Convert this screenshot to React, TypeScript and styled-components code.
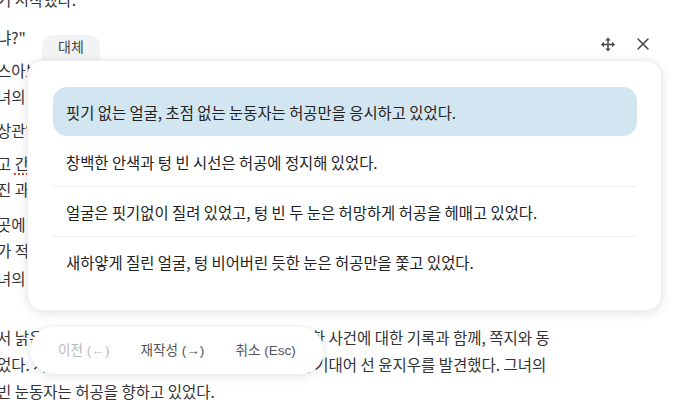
import React from 'react';
import styled, { createGlobalStyle } from 'styled-components';

const GlobalStyle = createGlobalStyle`
  html, body {
    margin: 0;
    padding: 0;
    background: #ffffff;
  }
  body {
    font-family: "Noto Sans CJK KR", "Noto Sans", sans-serif;
  }
`;

// background document lines: text, gap above (px)
const docLines: { text: string; gap: number; typo?: string; rest?: string }[] = [
  { text: '기 시작했다.', gap: 0 },
  { text: '냐?"', gap: 12 },
  { text: '스아브터 시작된 이야기는 점점 더 깊은 곳으로 흘러갔다.', gap: 7 },
  { text: '녀의 목소리는 낮고 차분했지만, 어딘가 떨리고 있었다.', gap: 0 },
  { text: '상관없다는 듯 그는 고개를 돌렸다.', gap: 8 },
  { text: '고 ', typo: '간', rest: '신히 버텨온 시간들이 한순간에 무너졌다.', gap: 7 },
  { text: '진 과거의 기억들이 하나둘 떠오르기 시작했다.', gap: 0 },
  { text: '곳에 남겨진 흔적은 누군가의 것이었다.', gap: 9 },
  { text: '가 적어 놓은 메모에는 알 수 없는 숫자들이 가득했다.', gap: 0 },
  { text: '녀의 얼굴은 창백하게 질려 있었다.', gap: 2 },
  {
    text: '서 낡은 서류를 꺼냈다. 안에는 오래전 해결되지 못한 사건에 대한 기록과 함께, 쪽지와 동',
    gap: 33,
  },
  {
    text: '었다. 사무실 안에 들어선 그는 창가의 차가운 벽에 기대어 선 윤지우를 발견했다. 그녀의',
    gap: 1,
  },
  { text: '빈 눈동자는 허공을 향하고 있었다.', gap: 1 },
];

const options = [
  '핏기 없는 얼굴, 초점 없는 눈동자는 허공만을 응시하고 있었다.',
  '창백한 안색과 텅 빈 시선은 허공에 정지해 있었다.',
  '얼굴은 핏기없이 질려 있었고, 텅 빈 두 눈은 허망하게 허공을 헤매고 있었다.',
  '새하얗게 질린 얼굴, 텅 비어버린 듯한 눈은 허공만을 쫓고 있었다.',
];

function MoveIcon() {
  return (
    <svg width="17" height="17" viewBox="0 0 24 24" fill="#444">
      <path d="M12 5v14M5 12h14" stroke="#444" strokeWidth="2.2" />
      <path d="M12 1.5l-4 4.5h8z" />
      <path d="M12 22.5l-4-4.5h8z" />
      <path d="M1.5 12l4.5-4v8z" />
      <path d="M22.5 12l-4.5-4v8z" />
    </svg>
  );
}

function CloseIcon() {
  return (
    <svg width="16" height="16" viewBox="0 0 24 24" fill="none">
      <path d="M4.5 4.5l15 15M19.5 4.5l-15 15" stroke="#444" strokeWidth="2.2" strokeLinecap="round" />
    </svg>
  );
}

function App() {
  const selected = 0;
  return (
    <Page>
      <GlobalStyle />
      <Doc>
        {docLines.map((l, i) => (
          <DocLine key={i} $gap={l.gap}>
            {l.text}
            {l.typo && <Typo>{l.typo}</Typo>}
            {l.rest}
          </DocLine>
        ))}
      </Doc>

      <Overlay>
        <Header>
          <Tab>대체</Tab>
          <Tools>
            <IconButton aria-label="move">
              <MoveIcon />
            </IconButton>
            <IconButton aria-label="close">
              <CloseIcon />
            </IconButton>
          </Tools>
        </Header>
        <Panel>
          {options.map((o, i) => (
            <Option
              key={i}
              $active={i === selected}
              $first={i === 0}
              $hideLine={i === selected || i === selected + 1}
            >
              {o}
            </Option>
          ))}
        </Panel>
        <Toolbar>
          <ToolButton $disabled>이전 (←)</ToolButton>
          <ToolButton>재작성 (→)</ToolButton>
          <ToolButton>취소 (Esc)</ToolButton>
        </Toolbar>
      </Overlay>
    </Page>
  );
}

const Page = styled.div`
  position: relative;
  width: 692px;
  height: 406px;
  overflow: hidden;
  background: #fff;
`;

const Doc = styled.div`
  margin-top: -14px;
  margin-left: -3px;
  color: #333;
  font-size: 15.5px;
`;

const DocLine = styled.div<{ $gap: number }>`
  margin-top: ${(p) => p.$gap}px;
  height: 26px;
  line-height: 26px;
  white-space: nowrap;
`;

const Typo = styled.span`
  text-decoration: underline dotted #e0443a;
  text-decoration-thickness: 1.5px;
  text-underline-offset: 3px;
`;

const Overlay = styled.div`
  position: absolute;
  z-index: 1;
  top: 35px;
  left: 27px;
  width: 635px;
  display: flex;
  flex-direction: column;
`;

const Header = styled.div`
  display: flex;
  justify-content: space-between;
  align-items: flex-end;
  height: 25px;
`;

const Tab = styled.div`
  margin-left: 15px;
  width: 58px;
  height: 27px;
  margin-bottom: -2px;
  box-sizing: border-box;
  padding-top: 1px;
  text-align: center;
  background: #f1f3f5;
  border-radius: 11px 11px 0 0;
  color: #444;
  font-size: 14px;
  line-height: 20px;
`;

const Tools = styled.div`
  display: flex;
  align-self: flex-start;
  gap: 19px;
  padding-right: 11px;
  margin-top: 1px;
`;

const IconButton = styled.button`
  display: flex;
  align-items: center;
  justify-content: center;
  width: 16px;
  height: 16px;
  padding: 0;
  border: none;
  background: none;
  cursor: pointer;
`;

const Panel = styled.div`
  position: relative;
  background: #fff;
  border-radius: 16px;
  border: 1px solid #f0f0f2;
  box-shadow: 0 0 6px rgba(0, 0, 0, 0.06), 0 3px 12px rgba(0, 0, 0, 0.08);
  padding: 26px 24px 24px 25px;
  display: flex;
  flex-direction: column;
`;

const Option = styled.div<{ $active?: boolean; $first?: boolean; $hideLine?: boolean }>`
  min-height: 49px;
  display: flex;
  align-items: center;
  padding: 0 13px;
  font-size: 15.4px;
  color: #222;
  border-top: ${(p) => (p.$first ? 'none' : `1px solid ${p.$hideLine ? 'transparent' : '#eeeff1'}`)};
  background: ${(p) => (p.$active ? '#d2e6f2' : 'transparent')};
  border-radius: ${(p) => (p.$active ? '14px' : '0')};
  white-space: nowrap;
`;

const Toolbar = styled.div`
  align-self: flex-start;
  margin-top: 16px;
  margin-left: 3px;
  width: 294px;
  height: 47px;
  box-sizing: border-box;
  padding: 0 0 3px 28px;
  display: flex;
  align-items: center;
  gap: 31px;
  background: #fff;
  border-radius: 24px;
  box-shadow: 0 0 6px rgba(0, 0, 0, 0.06), 0 3px 12px rgba(0, 0, 0, 0.08);
`;

const ToolButton = styled.button<{ $disabled?: boolean }>`
  border: none;
  background: none;
  padding: 0;
  font-family: "Liberation Sans", "Noto Sans CJK KR", sans-serif;
  font-size: 13.6px;
  color: ${(p) => (p.$disabled ? '#b9b9b9' : '#555')};
  cursor: ${(p) => (p.$disabled ? 'default' : 'pointer')};
  white-space: nowrap;
`;

export default App;
